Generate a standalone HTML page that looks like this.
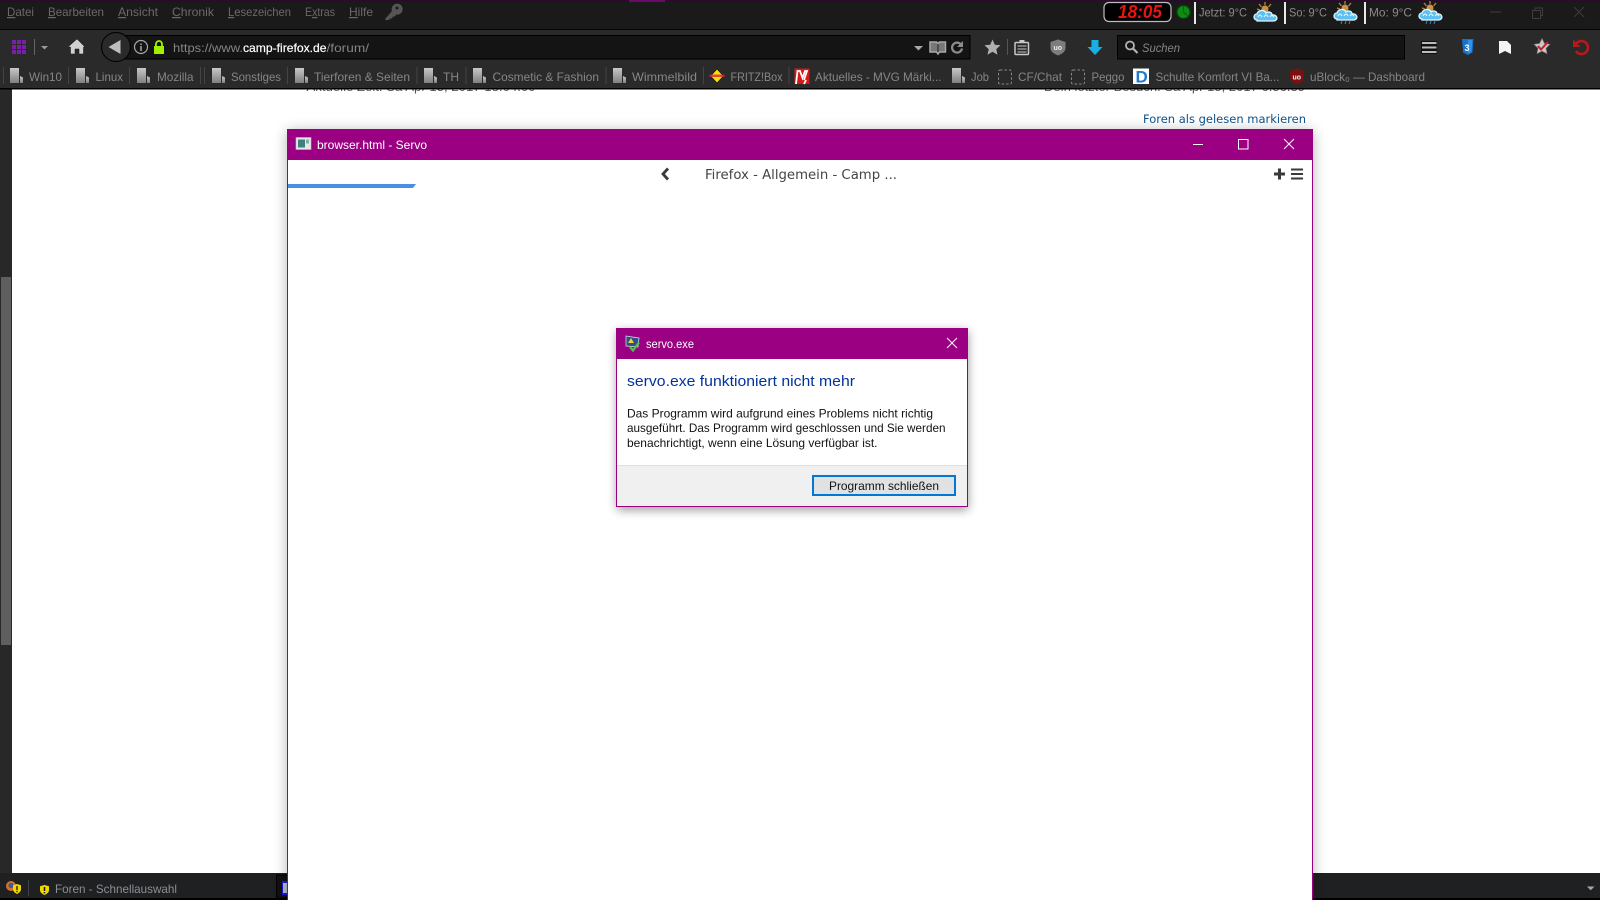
<!DOCTYPE html>
<html><head><meta charset="utf-8"><title>browser.html - Servo</title>
<style>
html,body{margin:0;padding:0;background:#fff;overflow:hidden}
svg{display:block}
text{font-family:"Liberation Sans",sans-serif;font-size:12px;white-space:pre}
.m{fill:#6a6a6a}
.b{fill:#868686}
.w{fill:#8a8a8a}
.t{fill:#fff}
.d{fill:#111}
</style></head><body>
<svg xmlns="http://www.w3.org/2000/svg" width="1600" height="900" viewBox="0 0 1600 900">
<defs>
<linearGradient id="fg" x1="0" y1="0" x2="0" y2="1"><stop offset="0" stop-color="#c8c8c8"/><stop offset="1" stop-color="#808080"/></linearGradient>
<filter id="sh" x="-10%" y="-10%" width="120%" height="120%"><feGaussianBlur stdDeviation="7"/></filter>
<filter id="sh2" x="-15%" y="-15%" width="130%" height="130%"><feGaussianBlur stdDeviation="5"/></filter>
<g id="f"><path d="M0 0h9v15H0z" fill="url(#fg)"/><path d="M10 8l3 1.5V15h-3z" fill="url(#fg)"/></g>
<g id="wx">
<path d="M11 0v3M5 2l2.500 3M17 2l-2.500 3M3 7l3 1" stroke="#b8863c" stroke-width="1.300"/>
<circle cx="11" cy="7" r="3.500" fill="#c89448"/>
<path d="M3 18c-4 0-4-6 0-6 1-4 7-5 9-1 2-2 6-1 6 2 5-1 7 5 2 6H3z" fill="#5cc0f0" stroke="#dff6ff" stroke-width="1.300"/>
<path d="M4 15q2-4 4 0M10 15q2-4 4 0M16 15q2-3 4 0" stroke="#eaf9ff" fill="none"/>
</g>
<g id="wr"><use href="#wx"/><path d="M8 20l-1 3M12 20l-1 3M16 20l-1 3" stroke="#3a8ac0" stroke-width="1"/></g>
</defs>

<rect width="1600" height="900" fill="#fff"/>
<rect x="0" y="89" width="12" height="785" fill="#282828"/>
<rect x="1" y="277" width="10" height="368" fill="#5f5f5f"/>

<text x="306.5" y="91" textLength="229" lengthAdjust="spacingAndGlyphs" fill="#555">Aktuelle Zeit: Sa Apr 15, 2017 18:04:00</text>
<text x="1044" y="91" textLength="261" lengthAdjust="spacingAndGlyphs" fill="#555">Dein letzter Besuch: Sa Apr 15, 2017 6:56:39</text>
<text x="1143" y="123" textLength="163" lengthAdjust="spacingAndGlyphs" fill="#105289" style="font-family:'DejaVu Sans',sans-serif;font-size:11.5px">Foren als gelesen markieren</text>

<rect x="0" y="0" width="1600" height="29" fill="#1a1a1a"/>
<rect x="0" y="0" width="1600" height="2" fill="#2c0a2c"/>
<rect x="629" y="0" width="36" height="2" fill="#6a0a6a"/>
<rect x="0" y="29" width="1600" height="1" fill="#050505"/>
<rect x="0" y="30" width="1600" height="58" fill="#2a2a2a"/>
<rect x="0" y="88" width="1600" height="1.5" fill="#000"/>

<text class="m" x="7" y="16" textLength="27" lengthAdjust="spacingAndGlyphs"><tspan text-decoration="underline">D</tspan>atei</text>
<text class="m" x="48" y="16" textLength="56" lengthAdjust="spacingAndGlyphs"><tspan text-decoration="underline">B</tspan>earbeiten</text>
<text class="m" x="118" y="16" textLength="40" lengthAdjust="spacingAndGlyphs"><tspan text-decoration="underline">A</tspan>nsicht</text>
<text class="m" x="172" y="16" textLength="42" lengthAdjust="spacingAndGlyphs"><tspan text-decoration="underline">C</tspan>hronik</text>
<text class="m" x="228" y="16" textLength="63" lengthAdjust="spacingAndGlyphs"><tspan text-decoration="underline">L</tspan>esezeichen</text>
<text class="m" x="305" y="16" textLength="30" lengthAdjust="spacingAndGlyphs">E<tspan text-decoration="underline">x</tspan>tras</text>
<text class="m" x="349" y="16" textLength="24" lengthAdjust="spacingAndGlyphs"><tspan text-decoration="underline">H</tspan>ilfe</text>
<path d="M385 19l7-8a5.500 5.500 0 1 1 4 3.500l-1 2-2 0-1 2-2 0-1 1.500h-3.500z" fill="#555"/><circle cx="397" cy="8" r="1.500" fill="#1a1a1a"/>

<rect x="1104" y="2.500" width="67" height="19" rx="5" fill="#000" stroke="#bdbdbd" stroke-width="1.200"/>
<text x="1118" y="18" textLength="44" lengthAdjust="spacingAndGlyphs" fill="#e81414" style="font-size:18px;font-style:italic;font-weight:bold">18:05</text>
<circle cx="1183.500" cy="12" r="7.500" fill="#0c3a0c"/><circle cx="1183.500" cy="12" r="6" fill="#0f8a14"/><path d="M1183.500 6.500v5.500l4 3.500" stroke="#0a5a0a" fill="none"/>
<rect x="1194" y="2" width="2" height="22" fill="#e8e8e8"/>
<text class="w" x="1199" y="16.500" textLength="48" lengthAdjust="spacingAndGlyphs">Jetzt: 9°C</text>
<use href="#wx" x="1254" y="2"/>
<rect x="1284" y="2" width="2" height="22" fill="#e8e8e8"/>
<text class="w" x="1289" y="16.500" textLength="38" lengthAdjust="spacingAndGlyphs">So: 9°C</text>
<use href="#wr" x="1334" y="1"/>
<rect x="1364" y="2" width="2" height="22" fill="#e8e8e8"/>
<text class="w" x="1369" y="16.500" textLength="43" lengthAdjust="spacingAndGlyphs">Mo: 9°C</text>
<use href="#wr" x="1419" y="1"/>
<rect x="1490" y="11.500" width="11" height="1" fill="#3d3d3d"/>
<path d="M1532.500 10.500h8v8h-8zM1535 10.500v-2.500h7.500v7.500h-2" fill="none" stroke="#3d3d3d"/>
<path d="M1574 7l10 10M1584 7l-10 10" stroke="#3d3d3d" fill="none"/>

<rect x="12" y="40" width="14" height="14" fill="#7a20a8"/>
<path d="M12 44.500h14M12 49.500h14M16.500 40v14M21.500 40v14" stroke="#2a2a2a" stroke-width="1"/>
<rect x="34" y="39" width="1" height="16" fill="#666"/>
<path d="M41 46h7l-3.500 3.500z" fill="#9a9a9a"/>
<path d="M77 39l-9 8h2.500v7h4.500v-5h4v5h4.500v-7H85z" fill="#d0d0d0" stroke="#111" stroke-width=".5"/>
<rect x="112" y="35.500" width="858" height="23.500" fill="#141414" stroke="#000"/>
<circle cx="116" cy="47" r="14.500" fill="#2a2a2a" stroke="#050505" stroke-width="1.200"/>
<path d="M120.500 40v14l-12-7z" fill="#bdbdbd"/>
<circle cx="141" cy="47" r="6.500" fill="none" stroke="#a8a8a8" stroke-width="1.200"/><path d="M141 43.500v1.500M141 46v5" stroke="#a8a8a8" stroke-width="1.500"/>
<rect x="154" y="46" width="10" height="8" fill="#a0f000"/><path d="M156 46v-2a3 3 0 0 1 6 0v2" fill="none" stroke="#a0f000" stroke-width="1.800"/>
<text x="173" y="52" textLength="70" lengthAdjust="spacingAndGlyphs" fill="#858585">https://www.</text>
<text x="243" y="52" textLength="83.500" lengthAdjust="spacingAndGlyphs" fill="#fff" stroke="#fff" stroke-width=".2">camp-firefox.de</text>
<text x="326.500" y="52" textLength="42.500" lengthAdjust="spacingAndGlyphs" fill="#858585">/forum/</text>
<path d="M914 46h9l-4.500 4.500z" fill="#a8a8a8"/>
<path d="M930 42h6.500l1.500 1.500 1.500-1.500h6v10h-6l-1.500 2-1.500-2H930z" fill="#777" stroke="#a8a8a8" stroke-width="1.500"/><path d="M938 44v8" stroke="#222"/>
<path d="M961 44.500a5 5 0 1 0 1 4" fill="none" stroke="#8c8c8c" stroke-width="2.200"/><path d="M963 41v6h-6z" fill="#8c8c8c"/>
<path d="M992.500 39.500l2.300 5.200 5.700.6-4.200 3.800 1.200 5.600-5-2.900-5 2.900 1.200-5.600-4.200-3.800 5.700-.6z" fill="#b0b0b0"/>
<rect x="1007" y="39" width="1" height="16" fill="#555"/>
<rect x="1015" y="42.500" width="13.500" height="12" rx="1" fill="none" stroke="#c8c8c8" stroke-width="1.500"/><path d="M1017.500 46h9M1017.500 49h9M1017.500 52h9" stroke="#c8c8c8"/><rect x="1019.500" y="40" width="5" height="3" fill="#c8c8c8"/>
<path d="M1058 39.500l7.500 2.500v6c0 4-4 6-7.500 7.500-3.500-1.500-7.500-3.500-7.500-7.500v-6z" fill="#7d7d7d"/><text x="1053.500" y="50" style="font-size:7px;font-weight:bold" fill="#eee">uo</text>
<path d="M1091.500 40h7v7h4l-7.500 8-7.500-8h4z" fill="#18b0e4"/>
<rect x="1117.500" y="35.500" width="287" height="23.500" fill="#141414" stroke="#000"/>
<circle cx="1130" cy="45.500" r="4" fill="none" stroke="#b4b4b4" stroke-width="1.800"/><path d="M1133 48.500l4.500 4.500" stroke="#b4b4b4" stroke-width="2.200"/>
<text x="1142" y="52" textLength="38" lengthAdjust="spacingAndGlyphs" fill="#858585" style="font-style:italic">Suchen</text>
<rect x="1421" y="41" width="16" height="13" fill="#111"/>
<path d="M1422 43h14.500M1422 47.500h14.500M1422 52h14.500" stroke="#bbb" stroke-width="2"/>
<path d="M1462 39h11.500l-1 13.500-4.700 2.500-4.700-2.500z" fill="#1572c8"/><path d="M1467.800 40v14l3.600-2 .9-12z" fill="#2d94e8"/><text x="1464.500" y="51" fill="#fff" style="font-size:9px;font-weight:bold">3</text>
<path d="M1499 41h8l4 4v9l-6-3-6 3z" fill="#f4f4f4"/>
<path d="M1542 38.500l2.500 5 5.500.8-4 3.900 1 5.500-5-2.600-5 2.600 1-5.500-4-3.900 5.500-.8z" fill="#c8c8c8" stroke="#777" stroke-width=".6"/><path d="M1538 46l3 3.500 7-7.500" fill="none" stroke="#cc1a2a" stroke-width="2"/>
<path d="M1576 44a6.500 6.500 0 1 1 0 7" fill="none" stroke="#b81818" stroke-width="2.600"/><path d="M1573 39.500v7.500h7.500z" fill="#b81818"/>

<g fill="#444">
<rect x="3" y="67" width="1" height="17"/><rect x="68" y="67" width="1" height="17"/><rect x="129" y="67" width="1" height="17"/><rect x="200" y="67" width="1" height="17"/><rect x="204" y="67" width="1" height="17"/><rect x="287" y="67" width="1" height="17"/><rect x="416.500" y="67" width="1" height="17"/><rect x="465.500" y="67" width="1" height="17"/><rect x="605.500" y="67" width="1" height="17"/><rect x="703" y="67" width="1" height="17"/><rect x="788.500" y="67" width="1" height="17"/>
</g>
<use href="#f" x="10" y="68"/><text class="b" x="29" y="81" textLength="33" lengthAdjust="spacingAndGlyphs">Win10</text>
<use href="#f" x="76" y="68"/><text class="b" x="95.500" y="81" textLength="27.500" lengthAdjust="spacingAndGlyphs">Linux</text>
<use href="#f" x="137" y="68"/><text class="b" x="157" y="81" textLength="36.500" lengthAdjust="spacingAndGlyphs">Mozilla</text>
<use href="#f" x="212" y="68"/><text class="b" x="231" y="81" textLength="50" lengthAdjust="spacingAndGlyphs">Sonstiges</text>
<use href="#f" x="295" y="68"/><text class="b" x="314" y="81" textLength="96" lengthAdjust="spacingAndGlyphs">Tierforen &amp; Seiten</text>
<use href="#f" x="424" y="68"/><text class="b" x="443" y="81" textLength="16" lengthAdjust="spacingAndGlyphs">TH</text>
<use href="#f" x="473" y="68"/><text class="b" x="492.500" y="81" textLength="106.500" lengthAdjust="spacingAndGlyphs">Cosmetic &amp; Fashion</text>
<use href="#f" x="613" y="68"/><text class="b" x="632" y="81" textLength="65" lengthAdjust="spacingAndGlyphs">Wimmelbild</text>
<path d="M717 69l6.500 7-6.500 7-6.500-7z" fill="#f8e000" stroke="#111" stroke-width=".6"/><rect x="709.500" y="74.500" width="15" height="2.500" fill="#d8204a" opacity=".8"/>
<text class="b" x="730.500" y="81" textLength="52" lengthAdjust="spacingAndGlyphs">FRITZ!Box</text>
<rect x="794.500" y="68.500" width="15" height="15.500" fill="#d81818"/><path d="M796 84l1.500-13h2.500l2.500 7 2.500-7h2l-3 9M804 84l2-4" fill="none" stroke="#fff" stroke-width="1.800"/>
<text class="b" x="815" y="81" textLength="126.500" lengthAdjust="spacingAndGlyphs">Aktuelles - MVG Märki...</text>
<use href="#f" x="952" y="68"/><text class="b" x="971" y="81" textLength="18" lengthAdjust="spacingAndGlyphs">Job</text>
<rect x="998.500" y="70" width="13" height="14" rx="1.500" fill="none" stroke="#8a8a8a" stroke-dasharray="2.500 2"/>
<text class="b" x="1018" y="81" textLength="44" lengthAdjust="spacingAndGlyphs">CF/Chat</text>
<rect x="1071.500" y="70" width="13" height="14" rx="1.500" fill="none" stroke="#8a8a8a" stroke-dasharray="2.500 2"/>
<text class="b" x="1091.500" y="81" textLength="33" lengthAdjust="spacingAndGlyphs">Peggo</text>
<rect x="1133" y="68.500" width="16" height="15.500" fill="#fff"/>
<text x="1135.500" y="82.500" fill="#1f7ad0" style="font-size:17px;font-weight:bold">D</text>
<text class="b" x="1155.500" y="81" textLength="124" lengthAdjust="spacingAndGlyphs">Schulte Komfort VI Ba...</text>
<path d="M1297 68.500l7 2.500v6.500c0 3.500-3.500 5.500-7 7-3.500-1.500-7-3.500-7-7V71z" fill="#7a1010"/><text x="1292.500" y="79.500" fill="#f4f4f4" style="font-size:7px;font-weight:bold">uo</text>
<text class="b" x="1310" y="81" textLength="115" lengthAdjust="spacingAndGlyphs">uBlock₀ — Dashboard</text>

<rect x="0" y="873" width="1600" height="25" fill="#1f2021"/>
<rect x="0" y="898" width="1600" height="2" fill="#000"/>
<circle cx="11" cy="886" r="5" fill="#d8702a"/><circle cx="11" cy="885.500" r="2.600" fill="#3c5a9a"/>
<path d="M17 884l4 1.200v3.800c0 2.500-2 4-4 5-2-1-4-2.500-4-5v-3.800z" fill="#f0d800"/><rect x="16.300" y="886" width="1.400" height="4" fill="#222"/><rect x="16.300" y="890.800" width="1.400" height="1.400" fill="#222"/>
<rect x="28" y="880" width="1" height="16" fill="#444"/>
<path d="M44.500 885l4.500 1.200v3.800c0 2.500-2.400 4.100-4.500 5-2.100-.9-4.500-2.500-4.500-5v-3.800z" fill="#f0d800"/><rect x="43.700" y="887" width="1.600" height="4" fill="#222"/><rect x="43.700" y="892" width="1.600" height="1.400" fill="#222"/>
<text x="55" y="893" textLength="122" lengthAdjust="spacingAndGlyphs" fill="#8a9096">Foren - Schnellauswahl</text>
<rect x="276.500" y="875" width="11" height="23" fill="#111" stroke="#000"/>
<rect x="282" y="881" width="6" height="14" fill="#1a1ae0"/><rect x="283" y="883" width="5" height="10" fill="#b8c0d0"/>
<path d="M1587 886.500h7.500l-3.750 3.750z" fill="#a8a8a8"/>

<rect x="287" y="131" width="1026" height="790" fill="#000" opacity=".3" filter="url(#sh)"/>
<rect x="287.500" y="129.500" width="1025" height="790" fill="#fff" stroke="#9b0082"/>
<rect x="287" y="129" width="1026" height="31" fill="#9b0082"/>
<rect x="296" y="137.500" width="15" height="12" fill="#e8e8e8" stroke="#bbb" stroke-width=".6"/><rect x="298" y="139.500" width="7" height="8" fill="#3f7f82"/><rect x="306" y="139.500" width="3" height="4" fill="#8aa"/>
<text class="t" x="317" y="149" textLength="110" lengthAdjust="spacingAndGlyphs">browser.html - Servo</text>
<rect x="1193" y="144" width="10" height="1" fill="#fff"/>
<rect x="1238.500" y="139.500" width="9.500" height="9.500" fill="none" stroke="#fff"/>
<path d="M1284 139l10 10M1294 139l-10 10" stroke="#fff" fill="none"/>
<path d="M288 184h128l-3 4H288z" fill="#4a90e2"/>
<path d="M668 168.500l-5 5.500 5 5.500" fill="none" stroke="#3a3a3a" stroke-width="2.800"/>
<text x="705" y="179" textLength="192" lengthAdjust="spacingAndGlyphs" fill="#444" style="font-family:'DejaVu Sans',sans-serif;font-size:13px">Firefox - Allgemein - Camp ...</text>
<path d="M1279.500 168.500v11M1274 174h11" stroke="#3a3a3a" stroke-width="3"/>
<path d="M1291 169.500h12M1291 174h12M1291 178.500h12" stroke="#3a3a3a" stroke-width="2"/>

<rect x="617" y="331" width="351" height="179" fill="#000" opacity=".4" filter="url(#sh2)"/>
<rect x="616.500" y="328.500" width="351" height="178" fill="#fff" stroke="#9b0082"/>
<rect x="617" y="329" width="351" height="30" fill="#9b0082"/>
<path d="M626 336l13 2-1 9-12-1z" fill="#2f4f8a" stroke="#cfd8e8" stroke-width=".8"/><path d="M631 338l3 5h-6z" fill="#f0d030"/><path d="M630 347l3 3.500 6-8" fill="none" stroke="#50c050" stroke-width="2.200"/>
<text class="t" x="646" y="348" textLength="48" lengthAdjust="spacingAndGlyphs">servo.exe</text>
<path d="M947 338l10 10M957 338l-10 10" stroke="#fff" fill="none"/>
<text x="627" y="386" textLength="228" lengthAdjust="spacingAndGlyphs" fill="#003399" style="font-size:15px">servo.exe funktioniert nicht mehr</text>
<text class="d" x="627" y="417.500" textLength="306" lengthAdjust="spacingAndGlyphs">Das Programm wird aufgrund eines Problems nicht richtig</text>
<text class="d" x="627" y="432" textLength="318.500" lengthAdjust="spacingAndGlyphs">ausgeführt. Das Programm wird geschlossen und Sie werden</text>
<text class="d" x="627" y="447" textLength="250.500" lengthAdjust="spacingAndGlyphs">benachrichtigt, wenn eine Lösung verfügbar ist.</text>
<rect x="617" y="465" width="350" height="41" fill="#f0f0f0"/>
<rect x="617" y="465" width="350" height="1" fill="#dfdfdf"/>
<rect x="813" y="476" width="142" height="19" fill="#e1e1e1" stroke="#0078d7" stroke-width="2"/>
<text class="d" x="829" y="490" textLength="110" lengthAdjust="spacingAndGlyphs">Programm schließen</text>
</svg>
</body></html>
